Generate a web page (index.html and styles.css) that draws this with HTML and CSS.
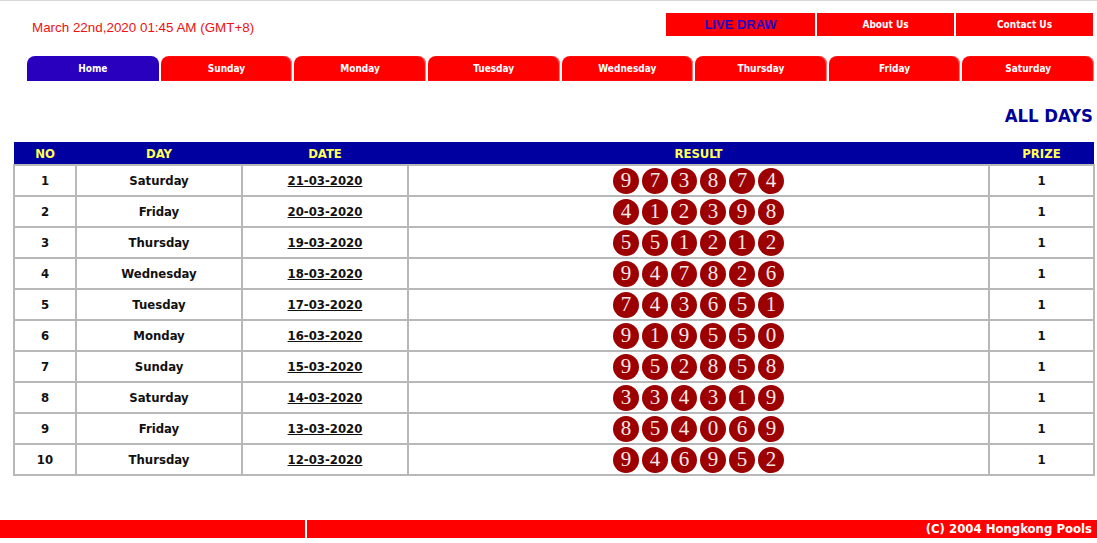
FILE: index.html
```html
<!DOCTYPE html>
<html>
<head>
<meta charset="utf-8">
<link rel="stylesheet" href="styles.css">
</head>
<body>
<div class="page">
  <div class="top">
    <div class="clock">March 22nd,2020 01:45 AM (GMT+8)</div>
    <div class="links">
      <a class="btn live">LIVE DRAW</a>
      <a class="btn about">About Us</a>
      <a class="btn contact">Contact Us</a>
    </div>
  </div>
  <div class="tabs">
    <a class="tab active">Home</a>
    <a class="tab">Sunday</a>
    <a class="tab">Monday</a>
    <a class="tab">Tuesday</a>
    <a class="tab">Wednesday</a>
    <a class="tab">Thursday</a>
    <a class="tab">Friday</a>
    <a class="tab">Saturday</a>
  </div>
  <h1 class="title">ALL DAYS</h1>
  <table class="results">
    <colgroup>
      <col class="c-no"><col class="c-day"><col class="c-date"><col class="c-res"><col class="c-prize">
    </colgroup>
    <thead>
      <tr><th>NO</th><th>DAY</th><th>DATE</th><th>RESULT</th><th>PRIZE</th></tr>
    </thead>
    <tbody>
      <tr><td>1</td><td>Saturday</td><td><a class="date">21-03-2020</a></td><td><span class="ball">9</span><span class="ball">7</span><span class="ball">3</span><span class="ball">8</span><span class="ball">7</span><span class="ball">4</span></td><td>1</td></tr>
      <tr><td>2</td><td>Friday</td><td><a class="date">20-03-2020</a></td><td><span class="ball">4</span><span class="ball">1</span><span class="ball">2</span><span class="ball">3</span><span class="ball">9</span><span class="ball">8</span></td><td>1</td></tr>
      <tr><td>3</td><td>Thursday</td><td><a class="date">19-03-2020</a></td><td><span class="ball">5</span><span class="ball">5</span><span class="ball">1</span><span class="ball">2</span><span class="ball">1</span><span class="ball">2</span></td><td>1</td></tr>
      <tr><td>4</td><td>Wednesday</td><td><a class="date">18-03-2020</a></td><td><span class="ball">9</span><span class="ball">4</span><span class="ball">7</span><span class="ball">8</span><span class="ball">2</span><span class="ball">6</span></td><td>1</td></tr>
      <tr><td>5</td><td>Tuesday</td><td><a class="date">17-03-2020</a></td><td><span class="ball">7</span><span class="ball">4</span><span class="ball">3</span><span class="ball">6</span><span class="ball">5</span><span class="ball">1</span></td><td>1</td></tr>
      <tr><td>6</td><td>Monday</td><td><a class="date">16-03-2020</a></td><td><span class="ball">9</span><span class="ball">1</span><span class="ball">9</span><span class="ball">5</span><span class="ball">5</span><span class="ball">0</span></td><td>1</td></tr>
      <tr><td>7</td><td>Sunday</td><td><a class="date">15-03-2020</a></td><td><span class="ball">9</span><span class="ball">5</span><span class="ball">2</span><span class="ball">8</span><span class="ball">5</span><span class="ball">8</span></td><td>1</td></tr>
      <tr><td>8</td><td>Saturday</td><td><a class="date">14-03-2020</a></td><td><span class="ball">3</span><span class="ball">3</span><span class="ball">4</span><span class="ball">3</span><span class="ball">1</span><span class="ball">9</span></td><td>1</td></tr>
      <tr><td>9</td><td>Friday</td><td><a class="date">13-03-2020</a></td><td><span class="ball">8</span><span class="ball">5</span><span class="ball">4</span><span class="ball">0</span><span class="ball">6</span><span class="ball">9</span></td><td>1</td></tr>
      <tr><td>10</td><td>Thursday</td><td><a class="date">12-03-2020</a></td><td><span class="ball">9</span><span class="ball">4</span><span class="ball">6</span><span class="ball">9</span><span class="ball">5</span><span class="ball">2</span></td><td>1</td></tr>
    </tbody>
  </table>
  <div class="footer">
    <div class="foot-left"></div>
    <div class="foot-right">(C) 2004 Hongkong Pools</div>
  </div>
</div>
</body>
</html>
```
FILE: styles.css
```css
html, body {
  margin: 0;
  padding: 0;
  background: #ffffff;
}
.page {
  border-top: 1px solid #d8d8d8;
  width: 1097px;
  font-family: "DejaVu Sans Condensed", "DejaVu Sans", sans-serif;
}
.top {
  display: flex;
  justify-content: space-between;
  align-items: flex-start;
  padding: 12px 4px 0 32px;
  height: 43px;
}
.clock {
  font-family: "Liberation Sans", Arial, sans-serif;
  color: #ee1111;
  font-size: 13.4px;
  margin-top: 7px;
}
.links {
  display: flex;
  gap: 2px;
}
.btn {
  display: flex;
  align-items: center;
  justify-content: center;
  background: #ff0000;
  height: 23px;
  color: #ffffff;
  font-weight: bold;
  font-size: 10px;
}
.live {
  width: 149px;
  color: #2200cc;
  font-size: 13px;
  font-family: "Liberation Sans", Arial, sans-serif;
}
.about { width: 137px; }
.contact { width: 137px; }
.tabs {
  display: flex;
  gap: 2px;
  padding: 0 3px 0 27px;
}
.tab {
  flex: 1;
  height: 25px;
  display: flex;
  align-items: center;
  justify-content: center;
  background: #ff0000;
  color: #ffffff;
  font-weight: bold;
  font-size: 10px;
  border-radius: 8px 8px 0 0;
  box-shadow: inset -1px 0 1px #ff8080;
}
.tab.active {
  background: #2a00bf;
  box-shadow: none;
}
.title {
  margin: 25px 4px 0 0;
  text-align: right;
  color: #000099;
  font-size: 18.4px;
  font-weight: bold;
  height: 36px;
  line-height: 20px;
}
.results {
  margin-left: 13px;
  width: 1080px;
  border-collapse: collapse;
  table-layout: fixed;
}
.c-no { width: 62px; }
.c-day { width: 166px; }
.c-date { width: 166px; }
.c-res { width: 581px; }
.c-prize { width: 105px; }
.results th {
  background: #0000a0;
  color: #ffff55;
  font-size: 13px;
  font-weight: bold;
  height: 22px;
  padding: 0;
  border: 0;
}
.results td {
  border: 2px solid #b8b8b8;
  height: 29px;
  padding: 0;
  text-align: center;
  font-size: 13px;
  font-weight: bold;
  color: #111111;
}
.date {
  color: #111111;
  text-decoration: underline;
}
.ball {
  display: inline-flex;
  align-items: center;
  justify-content: center;
  width: 26px;
  height: 26px;
  margin: 0 1.5px;
  border-radius: 50%;
  background: #9c0000;
  color: #f4e8e8;
  font-family: "Liberation Serif", "Times New Roman", serif;
  font-weight: normal;
  font-size: 21px;
  vertical-align: middle;
}
.footer {
  display: flex;
  gap: 2px;
  margin-top: 44px;
  height: 18px;
}
.foot-left {
  width: 305px;
  background: #ff0000;
}
.foot-right {
  flex: 1;
  background: #ff0000;
  color: #ffffff;
  font-weight: bold;
  font-size: 13px;
  text-align: right;
  padding-right: 5px;
  line-height: 18px;
}
```
